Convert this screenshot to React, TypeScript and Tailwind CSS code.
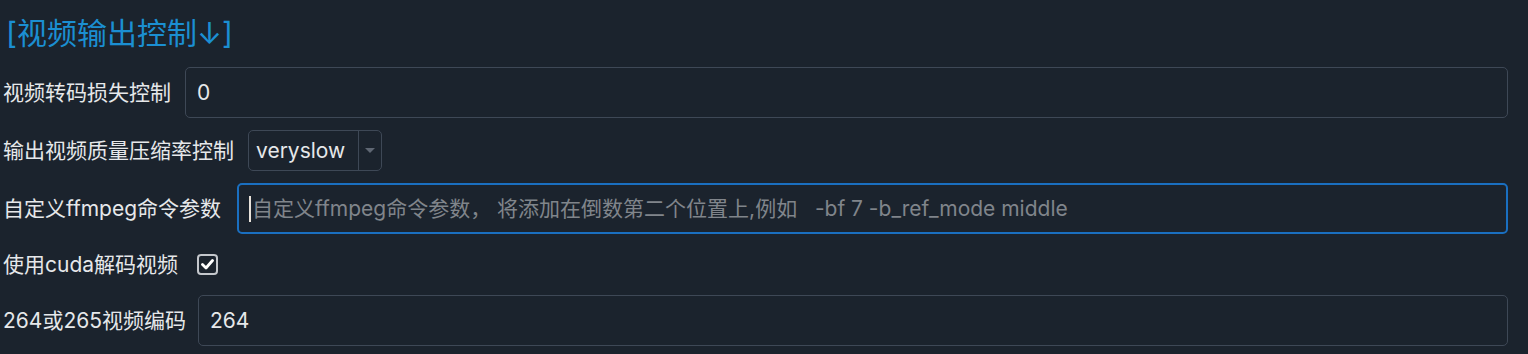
export default function App() {
  const font = { fontFamily: 'Inter, "Noto Sans CJK SC", sans-serif' };
  return (
    <div className="w-[1528px] h-[354px] bg-[#1b232d] text-[#e6e8ea] overflow-hidden pl-[3px] pr-[20px]" style={font}>
      <div className="h-[67px] flex items-center pl-[3px] text-[30px] text-[#1b8fd2] leading-none pb-[1px]">
        [视频输出控制↓]
      </div>

      <div className="flex flex-col gap-3 text-[21px]">
        <div className="flex items-center gap-[14px] h-[51px]">
          <span className="whitespace-nowrap">视频转码损失控制</span>
          <div className="flex-1 h-full flex items-center rounded-[5px] border border-[#3e4856] px-[11px]">0</div>
        </div>

        <div className="flex items-center gap-[14px] h-[41px]">
          <span className="whitespace-nowrap">输出视频质量压缩率控制</span>
          <div className="h-full w-[134px] flex items-center rounded-[5px] border border-[#3e4856]">
            <span className="flex-1 pl-[7px]">veryslow</span>
            <div className="w-[23px] h-full border-l border-[#3e4856] flex items-center justify-center">
              <svg width="10" height="6" viewBox="0 0 10 6">
                <path d="M0 0 L10 0 L5 5 Z" fill="#5f6773" />
              </svg>
            </div>
          </div>
        </div>

        <div className="flex items-center gap-4 h-[51px]">
          <span className="whitespace-nowrap">自定义ffmpeg命令参数</span>
          <div className="flex-1 h-full flex items-center rounded-[5px] border-2 border-[#1a6fc0] pl-[10px] text-[#80858b]">
            <span className="w-[2px] h-[26px] bg-[#e8e2da] mr-[1px]"></span>
            <span className="whitespace-pre">自定义ffmpeg命令参数， 将添加在倒数第二个位置上,例如   -bf 7 -b_ref_mode middle</span>
          </div>
        </div>

        <div className="flex items-center gap-[19px] h-[37px]">
          <span className="whitespace-nowrap">使用cuda解码视频</span>
          <div className="w-[21px] h-[21px] rounded-[4px] border-2 border-[#c4c7cc] flex items-center justify-center">
            <svg width="13" height="11" viewBox="0 0 13 11">
              <path d="M1.5 5.5 L5 9 L11.5 1.5" stroke="#ffffff" strokeWidth="2.8" fill="none" strokeLinecap="round" strokeLinejoin="round" />
            </svg>
          </div>
        </div>

        <div className="flex items-center gap-3 h-[51px]">
          <span className="whitespace-nowrap">264或265视频编码</span>
          <div className="flex-1 h-full flex items-center rounded-[5px] border border-[#3e4856] px-[11px]">264</div>
        </div>
      </div>
    </div>
  );
}
